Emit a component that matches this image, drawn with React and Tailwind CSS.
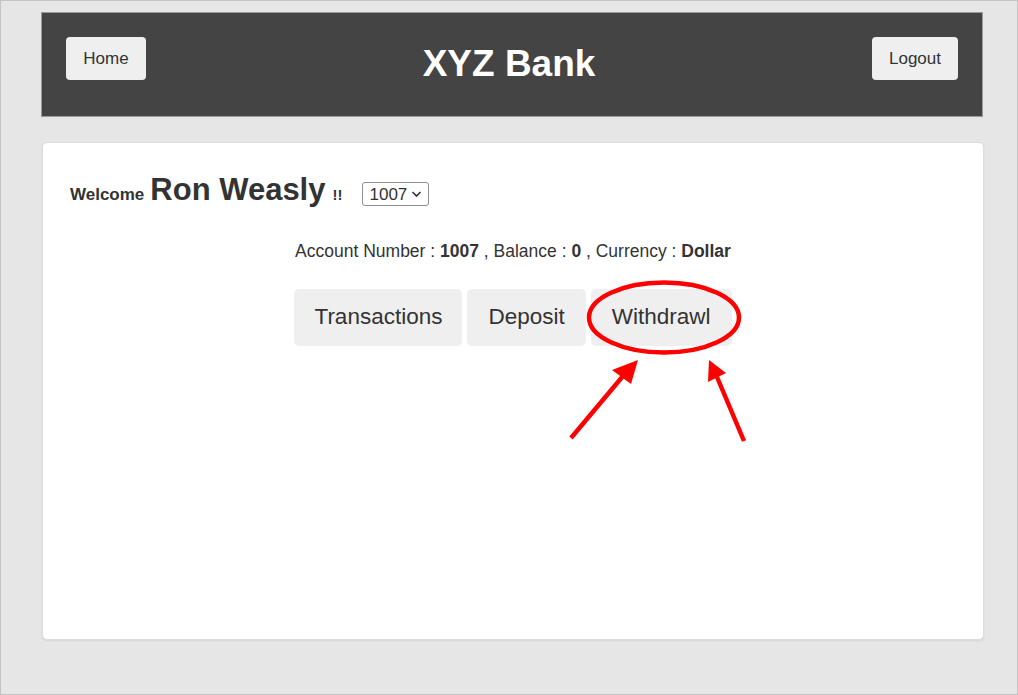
import React from "react";

export default function App() {
  const font = { fontFamily: '"Liberation Sans", Arial, sans-serif' };
  return (
    <div
      className="relative w-[1018px] h-[695px] bg-[#e6e6e6] border border-[#c4c4c4] overflow-hidden text-[#333]"
      style={font}
    >
      <header className="ml-[40px] mt-[11px] w-[942px] h-[105px] bg-[#444] border border-[#9a9a9a] flex items-start justify-between px-[24px] pt-[24px]">
        <button className="h-[43px] w-[80px] bg-[#efefef] rounded-[4px] text-[17px] text-[#333]">
          Home
        </button>
        <h1 className="text-[37px] font-bold text-white leading-none mt-[8px]">XYZ Bank</h1>
        <button className="h-[43px] w-[86px] bg-[#efefef] rounded-[4px] text-[17px] text-[#333]">
          Logout
        </button>
      </header>

      <main className="ml-[41px] mt-[25px] w-[942px] h-[498px] bg-white border border-[#dcdcdc] rounded-[5px] shadow-[0_1px_2px_rgba(0,0,0,0.08)] px-[27px] pt-[24px]">
        <div className="flex items-baseline">
          <span className="text-[17px] font-bold">Welcome</span>
          <span className="text-[31px] font-bold ml-[6px]">Ron Weasly</span>
          <span className="text-[15px] font-bold ml-[7px]">!!</span>
          <div className="ml-[20px] self-start mt-[15px] h-[24px] w-[67px] border border-[#8f8f8f] rounded-[3px] flex items-center pl-[6px] text-[17px] leading-none">
            <span>1007</span>
            <svg className="ml-[4px]" width="11" height="8" viewBox="0 0 11 8">
              <path d="M1.5 2 L5.5 6 L9.5 2" stroke="#333" strokeWidth="1.6" fill="none" />
            </svg>
          </div>
        </div>

        <p className="mt-[24px] text-center text-[17.5px]">
          Account Number : <b>1007</b> , Balance : <b>0</b> , Currency : <b>Dollar</b>
        </p>

        <div className="mt-[25px] flex justify-center gap-[5px]">
          <button className="h-[57px] px-[20px] bg-[#efefef] rounded-[5px] text-[22.5px] text-[#333]">
            Transactions
          </button>
          <button className="h-[57px] px-[21px] bg-[#efefef] rounded-[5px] text-[22.5px] text-[#333]">
            Deposit
          </button>
          <button className="h-[57px] px-[21px] bg-[#efefef] rounded-[5px] text-[22.5px] text-[#333]">
            Withdrawl
          </button>
        </div>
      </main>

      <svg
        className="absolute left-0 top-0 pointer-events-none"
        width="1018"
        height="695"
        viewBox="0 0 1018 695"
      >
        <ellipse cx="663" cy="316.5" rx="75" ry="35" fill="none" stroke="#f00" strokeWidth="4.5" />
        <line x1="570" y1="437" x2="622" y2="375" stroke="#f00" strokeWidth="4.5" />
        <polygon points="637,359 611,369 630,383" fill="#f00" />
        <line x1="743" y1="440" x2="716" y2="376" stroke="#f00" strokeWidth="4.5" />
        <polygon points="708,359 707,381 725,372" fill="#f00" />
      </svg>
    </div>
  );
}
